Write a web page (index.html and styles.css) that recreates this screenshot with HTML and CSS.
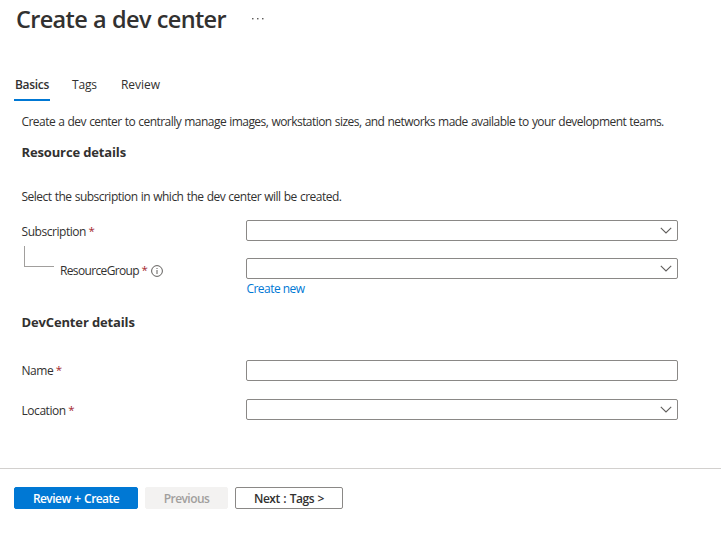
FILE: index.html
```html
<!DOCTYPE html>
<html lang="en">
<head>
<meta charset="utf-8">
<title>Create a dev center</title>
<link rel="stylesheet" href="styles.css">
</head>
<body>
<header class="page-header">
  <h1>Create a dev center</h1>
  <svg class="more" width="12" height="3" viewBox="0 0 12 3" fill="#605e5c"><rect x="0" y="0" width="1.5" height="1.4"/><rect x="5" y="0" width="1.5" height="1.4"/><rect x="10" y="0" width="1.5" height="1.4"/></svg>
</header>
<nav class="tabs">
  <a class="tab active">Basics</a>
  <a class="tab tags">Tags</a>
  <a class="tab review">Review</a>
</nav>
<main class="form">
  <p class="intro">Create a dev center to centrally manage images, workstation sizes, and networks made available to your development teams.</p>
  <h2>Resource details</h2>
  <p class="hint">Select the subscription in which the dev center will be created.</p>
  <div class="row subscription">
    <label><span>Subscription</span><span class="req">*</span></label>
    <div class="field"><svg class="chevron" width="12" height="7" viewBox="0 0 12 7"><path d="M.8.8 6 6 11.2.8"/></svg></div>
  </div>
  <div class="row group">
    <label><span class="branch"></span><span class="group-text">ResourceGroup</span><span class="req">*</span><svg class="info" width="12" height="12" viewBox="0 0 12 12"><circle cx="6" cy="6" r="5.4"/><path d="M6 5v4M6 3v1"/></svg></label>
    <div class="field"><svg class="chevron" width="12" height="7" viewBox="0 0 12 7"><path d="M.8.8 6 6 11.2.8"/></svg></div>
  </div>
  <a class="create-new">Create new</a>
  <h2 class="center-heading">DevCenter details</h2>
  <div class="row name">
    <label><span>Name</span><span class="req">*</span></label>
    <div class="field"></div>
  </div>
  <div class="row location">
    <label><span>Location</span><span class="req">*</span></label>
    <div class="field"><svg class="chevron" width="12" height="7" viewBox="0 0 12 7"><path d="M.8.8 6 6 11.2.8"/></svg></div>
  </div>
</main>
<footer class="actions">
  <button class="primary">Review + Create</button>
  <button class="disabled" disabled>Previous</button>
  <button class="next">Next : Tags &gt;</button>
</footer>
</body>
</html>
```
FILE: styles.css
```css
* { box-sizing: border-box; }
body {
  margin: 0;
  height: 541px;
  overflow: hidden;
  background: #fff;
  color: #323130;
  font: 12px/16px "Open Sans", "Noto Sans", sans-serif;
  letter-spacing: -0.45px;
  white-space: nowrap;
}
h1, h2, p { margin: 0; }
.page-header { display: flex; align-items: center; height: 38px; padding-left: 16px; }
h1 { width: 236px; padding-bottom: 1px; font-size: 23.5px; line-height: 30px; font-weight: 600; letter-spacing: -0.67px; word-spacing: 0.6px; }
.tabs { display: flex; height: 64px; padding: 37px 0 0 14px; letter-spacing: -0.2px; }
.tab { height: 26px; padding: 0 1px; line-height: 20px; }
.active { width: 36px; margin-right: 21px; border-bottom: 2px solid #0078d4; font-weight: 600; letter-spacing: -0.3px; }
.tags { width: 49px; }
.review { letter-spacing: -0.05px; }
.form { height: 366px; padding: 11px 0 0 21px; }
.intro { height: 30px; padding-left: 0.5px; line-height: 17px; letter-spacing: -0.55px; word-spacing: 0.6px; }
h2 { padding-left: 0.5px; font-size: 13px; line-height: 18px; font-weight: 700; letter-spacing: -0.14px; }
.hint { margin-top: 28px; height: 31px; padding-left: 0.5px; letter-spacing: -0.52px; word-spacing: 0.6px; }
.row { display: flex; height: 21px; }
.row label { display: flex; width: 225px; padding: 4px 0 0 0.5px; }
.field { display: flex; align-items: center; justify-content: flex-end; width: 432px; height: 21px; padding-right: 5px; border: 1px solid #8a8886; border-radius: 2px; }
.req { margin-left: 2.5px; color: #a4262c; font-size: 11.5px; line-height: 14px; }
.chevron { fill: none; stroke: #605e5c; stroke-width: 1.1; }
.group { margin-top: 17px; }
.group label { padding-top: 5px; }
.group-text { letter-spacing: -0.65px; }
.branch { width: 30px; height: 21px; margin: -17px 6px 0 2.5px; border: solid #a19f9d; border-width: 0 0 1px 1px; }
.info { margin: 2px 0 0 4px; fill: none; stroke: #605e5c; stroke-width: 1; }
.create-new { display: block; margin: 2px 0 0 225.5px; color: #0078d4; letter-spacing: -0.55px; }
.center-heading { margin-top: 16px; }
.name { margin-top: 29px; }
.name label { padding-top: 3px; }
.location { margin-top: 18px; }
.actions { display: flex; gap: 7px; padding: 18px 0 0 14px; border-top: 1px solid #d2d0ce; }
button { height: 22px; padding: 1px 0 0; border: 1px solid #8a8886; border-radius: 2px; background: #fff; color: #323130; font: 600 12px/19px "Open Sans", "Noto Sans", sans-serif; letter-spacing: -0.55px; word-spacing: 1px; }
.primary { width: 124px; border-color: #0078d4; background: #0078d4; color: #fff; }
.disabled { width: 83px; border-color: #f3f2f1; background: #f3f2f1; color: #a19f9d; }
.next { width: 108px; letter-spacing: -0.5px; }
```
